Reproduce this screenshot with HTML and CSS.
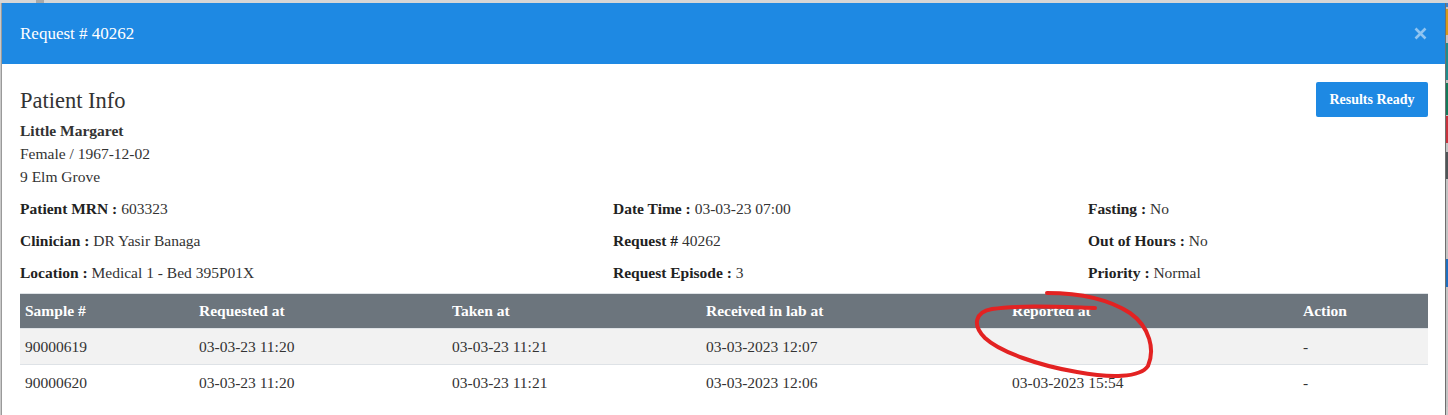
FILE: index.html
```html
<!DOCTYPE html>
<html>
<head>
<meta charset="utf-8">
<link rel="stylesheet" href="styles.css">
</head>
<body>
<div class="topbar"><span class="topbar-mark"></span></div>
<div class="page">
  <div class="modal">
    <div class="modal-header">
      <h5 class="modal-title">Request # 40262</h5>
      <button class="close" aria-label="Close">
        <svg width="13" height="13" viewBox="0 0 13 13"><path d="M1.5 1.5 L11.5 11.5 M11.5 1.5 L1.5 11.5" stroke="currentColor" stroke-width="2.6" stroke-linecap="butt"/></svg>
      </button>
    </div>
    <div class="modal-body">
      <div class="top-row">
        <div class="patient">
          <h4 class="section-title">Patient Info</h4>
          <div class="line bold">Little Margaret</div>
          <div class="line">Female / 1967-12-02</div>
          <div class="line">9 Elm Grove</div>
        </div>
        <button class="btn-results">Results Ready</button>
      </div>
      <div class="info-grid">
        <div class="info"><b>Patient MRN :</b> 603323</div>
        <div class="info"><b>Date Time :</b> 03-03-23 07:00</div>
        <div class="info"><b>Fasting :</b> No</div>
        <div class="info"><b>Clinician :</b> DR Yasir Banaga</div>
        <div class="info"><b>Request #</b> 40262</div>
        <div class="info"><b>Out of Hours :</b> No</div>
        <div class="info"><b>Location :</b> Medical 1 - Bed 395P01X</div>
        <div class="info"><b>Request Episode :</b> 3</div>
        <div class="info"><b>Priority :</b> Normal</div>
      </div>
      <table class="samples">
        <colgroup>
          <col class="c1"><col class="c2"><col class="c3"><col class="c4"><col class="c5"><col class="c6">
        </colgroup>
        <thead>
          <tr><th>Sample #</th><th>Requested at</th><th>Taken at</th><th>Received in lab at</th><th>Reported at</th><th>Action</th></tr>
        </thead>
        <tbody>
          <tr class="striped"><td>90000619</td><td>03-03-23 11:20</td><td>03-03-23 11:21</td><td>03-03-2023 12:07</td><td></td><td>-</td></tr>
          <tr><td>90000620</td><td>03-03-23 11:20</td><td>03-03-23 11:21</td><td>03-03-2023 12:06</td><td>03-03-2023 15:54</td><td>-</td></tr>
        </tbody>
      </table>
    </div>
  </div>
  <div class="side-strip">
    <span class="seg s-blue-top"></span>
    <span class="seg s-gray" style="height:2px"></span>
    <span class="seg s-orange"></span>
    <span class="seg s-gray" style="height:8px"></span>
    <span class="seg s-teal"></span>
    <span class="seg s-gray" style="height:3px"></span>
    <span class="seg s-green"></span>
    <span class="seg s-gray" style="height:1px"></span>
    <span class="seg s-red"></span>
    <span class="seg s-gray" style="height:9px"></span>
    <span class="seg s-dark"></span>
    <span class="seg s-gray" style="height:80px"></span>
    <span class="seg s-blue"></span>
    <span class="seg s-gray" style="height:120px"></span>
  </div>
</div>
<svg class="annotation" width="1448" height="415" viewBox="0 0 1448 415">
  <path d="M1047,293 C1080,293 1110,300 1130,313 C1150,327 1155,350 1148,366 C1140,378 1110,378 1077,372 C1040,366 1000,352 985,338 C972,325 975,312 992,309 C1020,305 1060,307 1095,308" fill="none" stroke="#e32222" stroke-width="4" stroke-linecap="round" stroke-linejoin="round"/>
</svg>
</body>
</html>
```

FILE: styles.css
```css
* { box-sizing: border-box; }

html, body {
  margin: 0;
  padding: 0;
}

body {
  width: 1448px;
  height: 415px;
  overflow: hidden;
  background: #c9c9c9;
  font-family: "Liberation Serif", "Times New Roman", serif;
  color: #333;
  font-size: 15.5px;
  position: relative;
}

.topbar {
  height: 3px;
  background: #d6d6d6;
  position: relative;
}

.topbar-mark {
  display: block;
  position: absolute;
  left: 36px;
  top: 0;
  width: 8px;
  height: 3px;
  background: #a9a9a9;
}

.page {
  display: flex;
  padding-left: 1px;
}

.modal {
  width: 1445px;
  background: #fff;
  border-left: 1px solid #9a9a9a;
  border-right: 1px solid #6f6f6f;
  height: 412px;
}

.modal-header {
  height: 61px;
  background: #1e89e3;
  display: flex;
  align-items: center;
  justify-content: space-between;
  padding: 0 18px 0 18px;
}

.modal-title {
  margin: 0;
  font-weight: normal;
  font-size: 17px;
  color: #fff;
}

.close {
  background: none;
  border: 0;
  padding: 0;
  color: rgba(255, 255, 255, 0.5);
  display: flex;
  margin-top: 0;
}

.modal-body {
  padding: 18px 16px 0 18px;
}

.top-row {
  display: flex;
  justify-content: space-between;
  align-items: flex-start;
}

.section-title {
  margin: 6px 0 5px;
  font-size: 22.5px;
  line-height: 26px;
  font-weight: normal;
  color: #333;
}

.line {
  line-height: 23px;
}

.bold { font-weight: bold; }

.btn-results {
  font-family: "Liberation Serif", "Times New Roman", serif;
  font-weight: bold;
  font-size: 14px;
  color: #fff;
  background: #1e89e3;
  border: 0;
  border-radius: 2px;
  width: 112px;
  height: 35px;
  padding: 0;
  margin-right: 1px;
}

.info-grid {
  display: grid;
  grid-template-columns: 593px 475px 1fr;
  grid-auto-rows: 32px;
  align-items: center;
  margin-top: 5px;
}

.info b { color: #222; }

.samples {
  margin-top: 4px;
  width: 1408px;
  border-collapse: collapse;
  table-layout: fixed;
  border-top: 1px solid #dee2e6;
}

.c1 { width: 174px; }
.c2 { width: 253px; }
.c3 { width: 254px; }
.c4 { width: 306px; }
.c5 { width: 291px; }
.c6 { width: 130px; }

.samples th {
  background: #6c757d;
  color: #fff;
  text-align: left;
  font-weight: bold;
  height: 35px;
  padding: 0 5px;
  border-bottom: 1px solid #dee2e6;
}

.samples td {
  height: 36px;
  padding: 0 5px;
  border-bottom: 1px solid #dee2e6;
}

.samples tbody tr:last-child td { border-bottom: 0; }

.striped td { background: #f2f2f2; }

.side-strip {
  width: 2px;
  display: flex;
  flex-direction: column;
}

.seg { display: block; width: 2px; }
.s-gray { background: #c4c4c4; }
.s-blue-top { height: 4px; background: #3b7fc4; }
.s-orange { height: 26px; background: #d69a1a; }
.s-teal { height: 37px; background: #1e8c8c; }
.s-green { height: 32px; background: #127a5a; }
.s-red { height: 27px; background: #c8323c; }
.s-dark { height: 27px; background: #4f5558; }
.s-blue { height: 28px; background: #1f6fc0; }

.annotation {
  position: absolute;
  left: 0;
  top: 0;
  pointer-events: none;
}
```
